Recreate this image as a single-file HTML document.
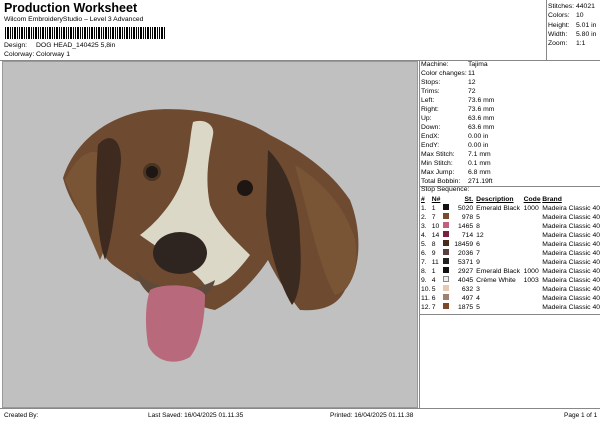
<!DOCTYPE html>
<html><head><meta charset="utf-8"><style>
*{margin:0;padding:0;box-sizing:border-box}
body{width:600px;height:424px;background:#fff;font-family:"Liberation Sans",sans-serif;font-size:7px;color:#000;position:relative;overflow:hidden}
.a{position:absolute;white-space:nowrap}
.r td{padding:0;height:9px;line-height:9px;font-size:6.8px}
</style></head><body>
<div class="a" style="left:4px;top:1px;font-size:12.5px;font-weight:bold">Production Worksheet</div>
<div class="a" style="left:4px;top:16px;font-size:6.8px">Wilcom EmbroideryStudio – Level 3 Advanced</div>
<div class="a" style="left:5px;top:27px;width:160px;height:12px;background:repeating-linear-gradient(90deg,#000 0 1px,#fff 1px 2px,#000 2px 4px,#fff 4px 5px,#000 5px 6px,#fff 6px 7px)"></div>
<div class="a" style="left:4px;top:42px;font-size:6.8px">Design:</div>
<div class="a" style="left:36px;top:42px;font-size:6.8px">DOG HEAD_140425 5,8in</div>
<div class="a" style="left:4px;top:51px;font-size:6.8px">Colorway:</div>
<div class="a" style="left:36px;top:51px;font-size:6.8px">Colorway 1</div>
<div class="a" style="left:546px;top:0;width:1px;height:60px;background:#888"></div>
<div class="a" style="left:548px;top:2px;font-size:6.8px;line-height:9.3px">Stitches:<br>Colors:<br>Height:<br>Width:<br>Zoom:</div>
<div class="a" style="left:576px;top:2px;font-size:6.8px;line-height:9.3px">44021<br>10<br>5.01 in<br>5.80 in<br>1:1</div>
<div class="a" style="left:0;top:60px;width:600px;height:1px;background:#888"></div>
<div class="a" style="left:2px;top:61px;width:416px;height:347px;background:#c0c0c0;border:1px solid #999"></div>
<div class="a" style="left:421px;top:60px;font-size:6.8px;line-height:9px">Machine:<br>Color changes:<br>Stops:<br>Trims:<br>Left:<br>Right:<br>Up:<br>Down:<br>EndX:<br>EndY:<br>Max Stitch:<br>Min Stitch:<br>Max Jump:<br>Total Bobbin:</div>
<div class="a" style="left:468px;top:60px;font-size:6.8px;line-height:9px">Tajima<br>11<br>12<br>72<br>73.6 mm<br>73.6 mm<br>63.6 mm<br>63.6 mm<br>0.00 in<br>0.00 in<br>7.1 mm<br>0.1 mm<br>6.8 mm<br>271.19ft</div>
<div class="a" style="left:419px;top:186px;width:181px;height:1px;background:#888"></div>
<div class="a" style="left:421px;top:186px;font-size:6.8px">Stop Sequence:</div>
<div class="a" style="left:419px;top:61px;width:1px;height:347px;background:#888"></div>
<table class="a r" style="left:421px;top:195px;border-collapse:collapse">
<tr style="font-weight:bold;text-decoration:underline"><td style="width:12px">#</td><td style="width:14px">N#</td><td style="width:10px"></td><td style="width:25px;text-align:right">St.</td><td style="width:54px;padding-left:3px">Description</td><td style="width:20px">Code</td><td>Brand</td></tr>
<tr><td>1.</td><td>1</td><td><i style="display:inline-block;width:6px;height:6px;background:#111"></i></td><td style="text-align:right">5020</td><td style="padding-left:3px">Emerald Black</td><td>1000</td><td>Madeira Classic 40</td></tr>
<tr><td>2.</td><td>7</td><td><i style="display:inline-block;width:6px;height:6px;background:#7a4a2a"></i></td><td style="text-align:right">978</td><td style="padding-left:3px">5</td><td></td><td>Madeira Classic 40</td></tr>
<tr><td>3.</td><td>10</td><td><i style="display:inline-block;width:6px;height:6px;background:#c0607a"></i></td><td style="text-align:right">1465</td><td style="padding-left:3px">8</td><td></td><td>Madeira Classic 40</td></tr>
<tr><td>4.</td><td>14</td><td><i style="display:inline-block;width:6px;height:6px;background:#7a2040"></i></td><td style="text-align:right">714</td><td style="padding-left:3px">12</td><td></td><td>Madeira Classic 40</td></tr>
<tr><td>5.</td><td>8</td><td><i style="display:inline-block;width:6px;height:6px;background:#4a2a18"></i></td><td style="text-align:right">18459</td><td style="padding-left:3px">6</td><td></td><td>Madeira Classic 40</td></tr>
<tr><td>6.</td><td>9</td><td><i style="display:inline-block;width:6px;height:6px;background:#5a4040"></i></td><td style="text-align:right">2036</td><td style="padding-left:3px">7</td><td></td><td>Madeira Classic 40</td></tr>
<tr><td>7.</td><td>11</td><td><i style="display:inline-block;width:6px;height:6px;background:#222"></i></td><td style="text-align:right">5371</td><td style="padding-left:3px">9</td><td></td><td>Madeira Classic 40</td></tr>
<tr><td>8.</td><td>1</td><td><i style="display:inline-block;width:6px;height:6px;background:#111"></i></td><td style="text-align:right">2927</td><td style="padding-left:3px">Emerald Black</td><td>1000</td><td>Madeira Classic 40</td></tr>
<tr><td>9.</td><td>4</td><td><i style="display:inline-block;width:6px;height:6px;background:#eee;border:1px solid #888"></i></td><td style="text-align:right">4045</td><td style="padding-left:3px">Crème White</td><td>1003</td><td>Madeira Classic 40</td></tr>
<tr><td>10.</td><td>5</td><td><i style="display:inline-block;width:6px;height:6px;background:#e8c8b0"></i></td><td style="text-align:right">632</td><td style="padding-left:3px">3</td><td></td><td>Madeira Classic 40</td></tr>
<tr><td>11.</td><td>6</td><td><i style="display:inline-block;width:6px;height:6px;background:#a08070"></i></td><td style="text-align:right">497</td><td style="padding-left:3px">4</td><td></td><td>Madeira Classic 40</td></tr>
<tr><td>12.</td><td>7</td><td><i style="display:inline-block;width:6px;height:6px;background:#7a4a2a"></i></td><td style="text-align:right">1875</td><td style="padding-left:3px">5</td><td></td><td>Madeira Classic 40</td></tr>
</table>
<div class="a" style="left:419px;top:314px;width:181px;height:1px;background:#888"></div>
<div class="a" style="left:0;top:408px;width:600px;height:1px;background:#888"></div>
<div class="a" style="left:4px;top:412px;font-size:6.5px">Created By:</div>
<div class="a" style="left:148px;top:412px;font-size:6.5px">Last Saved: 16/04/2025 01.11.35</div>
<div class="a" style="left:330px;top:412px;font-size:6.5px">Printed: 16/04/2025 01.11.38</div>
<div class="a" style="left:564px;top:412px;font-size:6.5px">Page 1 of 1</div>
<svg class="a" style="left:0;top:0" width="600" height="424">
<path d="M63,178 C75,140 110,115 150,110 C190,106 240,115 270,135 C300,150 330,170 350,200 C362,230 362,270 345,290 C340,300 330,312 300,310 C288,295 275,275 268,260 C255,280 235,300 215,310 C190,305 160,290 135,280 C115,265 105,265 98,240 C85,220 70,205 63,178 Z" fill="#6e4a30"/>
<path d="M65,180 C80,150 100,140 110,170 C115,200 110,240 100,260 C92,240 80,215 65,180Z" fill="#7a5535"/>
<path d="M98,145 C110,130 125,140 120,170 C115,210 112,240 105,260 C95,230 95,180 98,145Z" fill="#3e2a1e"/>
<path d="M268,150 C285,165 300,200 300,240 C302,270 300,295 292,305 C280,285 270,255 266,215 Z" fill="#3b2a20"/>
<path d="M295,165 C320,180 345,205 355,240 C360,270 350,290 335,295 C320,270 310,220 295,165Z" fill="#7a5535"/>
<path d="M193,122 C205,118 215,125 213,135 C208,160 205,180 210,205 C218,225 235,240 250,255 C235,275 220,290 205,285 C190,265 160,250 140,235 C160,220 180,195 185,170 C190,150 190,135 193,122Z" fill="#dcd8c8"/>
<circle cx="152" cy="172" r="9" fill="#4a3422"/><circle cx="152" cy="172" r="6" fill="#1e1612"/>
<circle cx="245" cy="188" r="8" fill="#1e1612"/>
<path d="M135,270 C150,290 190,295 215,280 C212,295 195,305 175,305 C155,302 140,290 135,270Z" fill="#5e4a3a"/>
<ellipse cx="180" cy="253" rx="27" ry="21" fill="#2e2420"/>
<path d="M150,290 C165,282 200,285 205,295 C205,320 200,345 190,357 C175,366 155,362 148,345 C145,325 145,305 150,290Z" fill="#b86a7c"/>
</svg>
</body></html>
